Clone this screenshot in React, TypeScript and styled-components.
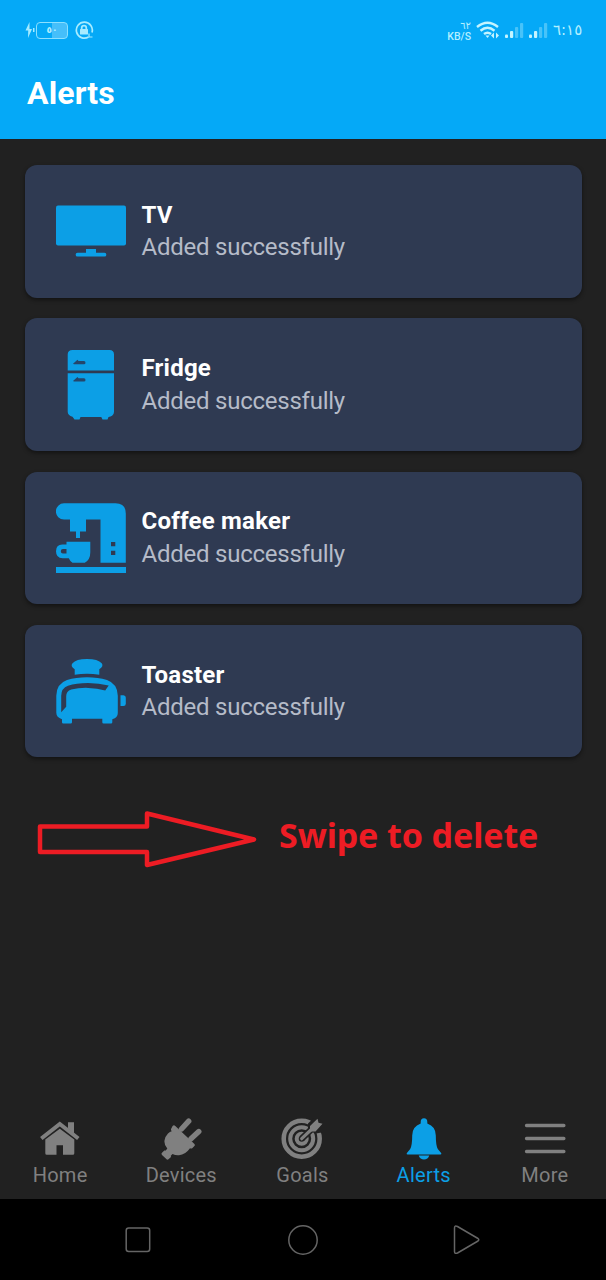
import React from "react";
import styled, { createGlobalStyle } from "styled-components";

const GlobalStyle = createGlobalStyle`
  * { box-sizing: border-box; }
  body { margin: 0; background: #212121; font-family: Roboto, "Liberation Sans", sans-serif; }
`;

const Screen = styled.div`
  width: 606px;
  height: 1280px;
  display: flex;
  flex-direction: column;
  background: #212121;
  overflow: hidden;
`;

const Header = styled.header`
  height: 139px;
  flex: none;
  background: #05a9f7;
`;

const StatusBar = styled.div`
  height: 60px;
  padding: 0 25px 0 24px;
  display: flex;
  justify-content: space-between;
  align-items: center;
  color: #b4efff;
`;

const StatusGroup = styled.div<{ $gap: number }>`
  display: flex;
  align-items: center;
  gap: ${(p) => p.$gap}px;
`;

const Battery = styled.div`
  width: 32px;
  height: 17px;
  border: 1px solid #8ce0ff;
  border-radius: 4px;
  display: flex;
  align-items: center;
  justify-content: center;
  font: 700 9px/15px "DejaVu Sans", sans-serif;
  background: linear-gradient(to right, transparent 50%, #46bffa 50%);
`;

const Speed = styled.div`
  display: flex;
  flex-direction: column;
  align-items: flex-end;
  font-size: 10.5px;
  line-height: 11px;
  font-weight: 500;
  padding-top: 1px;
`;

const SpeedValue = styled.span`
  font: 10px/11px "DejaVu Sans", sans-serif;
`;

const Clock = styled.span`
  font: 15px/20px "DejaVu Sans", sans-serif;
  width: 28px;
  text-align: right;
  white-space: nowrap;
`;

const PageTitle = styled.h1`
  margin: 13px 0 0 27px;
  color: #fff;
  font-size: 32px;
  line-height: 40px;
  font-weight: 700;
  letter-spacing: 0.15px;
`;

const AlertList = styled.main`
  padding: 26px 24.5px 0 24.5px;
  display: flex;
  flex-direction: column;
  gap: 20.8px;
`;

const AlertCard = styled.article`
  height: 132.5px;
  padding: 0 31.5px;
  display: flex;
  align-items: center;
  gap: 15.5px;
  border-radius: 12px;
  background: #2f3a52;
  box-shadow: 0 2px 4px rgba(0, 0, 0, 0.45);
`;

const DeviceIcon = styled.svg`
  width: 70px;
  height: 70px;
  flex: none;
  fill: #0c9fe6;
`;

const AlertBody = styled.div`
  line-height: 32.5px;
  white-space: nowrap;
`;

const AlertTitle = styled.div`
  color: #fff;
  font-size: 24px;
  font-weight: 700;
  letter-spacing: 0.22px;
`;

const AlertText = styled.div`
  color: #b5bbc8;
  font-size: 24px;
  letter-spacing: -0.24px;
`;

const Hint = styled.section`
  flex: 1;
  padding: 53px 0 0 36px;
  display: flex;
  align-items: flex-start;
  gap: 22px;
`;

const HintText = styled.span`
  color: #ed1c24;
  font: 700 34px/50px "Noto Sans", sans-serif;
  letter-spacing: -0.1px;
  white-space: nowrap;
`;

const TabBar = styled.nav`
  height: 86px;
  flex: none;
  display: grid;
  grid-template-columns: repeat(5, 1fr);
`;

const Tab = styled.div<{ $active?: boolean }>`
  display: flex;
  flex-direction: column;
  align-items: center;
  padding: 5px 1px 0 0;
  color: ${(p) => (p.$active ? "#0c9fe6" : "#808080")};
  font-size: 20px;
  line-height: 24px;
  letter-spacing: 0.25px;
  svg { width: 42px; height: 42px; margin-bottom: 3px; }
`;

const SystemBar = styled.footer`
  height: 81px;
  flex: none;
  padding: 0 123px 0 123px;
  display: flex;
  align-items: center;
  justify-content: space-between;
  background: #000;
`;

const SystemIcon = styled.svg`
  width: 30px;
  height: 30px;
  fill: none;
  stroke: #656565;
  stroke-width: 1.5;
  stroke-linejoin: round;
`;

const TvIcon = () => (
  <DeviceIcon viewBox="0 0 70 70">
    <rect x="0" y="9.500" width="70" height="40" rx="2" />
    <path d="M30 53h10v3.800h8.500a1.800 1.800 0 0 1 0 3.700h-27a1.800 1.800 0 0 1 0-3.700H30z" />
  </DeviceIcon>
);

const FridgeIcon = () => (
  <DeviceIcon viewBox="0 0 70 70">
    <path d="M16.500 0h37Q58 0 58 4.500v16H11.700v-16Q11.700 0 16.500 0zM11.700 23.200H58v38.300q0 3.500-3.500 5l-2 .5-1 2.500h-5L45.300 67H24.500l-1 2.500h-5l-2-2.700q-4.800-1.300-4.800-5z" />
    <g fill="#24466b">
      <path d="M17 13.800l4.500-4 1 1.300h5.500q1.500 0 1.500 1.600t-1.500 1.600H18z" />
      <path d="M17 31l4.500-4 1 1.300h5.500q1.500 0 1.500 1.600t-1.500 1.600H18z" />
    </g>
  </DeviceIcon>
);

const CoffeeIcon = () => (
  <DeviceIcon viewBox="0 0 70 70">
    <path
      fillRule="evenodd"
      d="M8 .3h51.500q10.300 0 10.300 10.200v49.200H44.500V16.500H30v12h-6V35h-4v-6.500h-6v-12H8A8 8 0 0 1 8 .3zM55 39v4.300h4.300V39zm0 8.700V52h4.300v-4.300z"
    />
    <path
      fillRule="evenodd"
      d="M10.500 38.700h23.800v10.500q0 7.500-5.500 10.500H16.500q-2.500-1.500-3.700-4.500H6.500Q0 55 0 48.200t6.500-6.700h4zm0 7.300H7a2.200 2.200 0 0 0 0 4.400h3.500z"
    />
    <rect y="64" width="70" height="6" />
  </DeviceIcon>
);

const ToasterIcon = () => (
  <DeviceIcon viewBox="0 -.8 70 70">
    <path d="M18.700 18v-5.500Q14 9.500 16.500 6.500 20 2.200 31 2.200T45.700 6.500q2.300 3-2.400 6V18Q31 16 18.700 18z" />
    <path
      fillRule="evenodd"
      d="M.3 39Q.5 27 11 23.300 20 20.500 31 20.500t20 2.800Q61.500 27 61.800 39v17q0 3.500-3 5.500l-2.500 1v3q0 1.300-1.300 1.300h-7.500q-1.200 0-1.200-1.300V62H16v3.500q0 1.300-1.300 1.300H7.200q-1.200 0-1.200-1.300v-3Q.3 60.500.3 56zM5.200 55.500l5-5.500V39.500q0-5 5-6.700 8-2 17-1.700 9 .2 17 2.700l3.500-5Q43 26.300 32 26.300 20 26.300 12 29 5.200 31.500 5.200 39z"
    />
    <path d="M64.500 38.500h3q2.300 0 2.300 2.500v6q0 2.300-2.300 2.300h-3z" />
  </DeviceIcon>
);

const HomeIcon = () => (
  <svg viewBox="0 0 42 42" fill="currentColor">
    <path d="M29 10.500V4.300h6v11.500z" />
    <path d="M2.300 20.500L20.800 6l18.500 14.500" fill="none" stroke="currentColor" strokeWidth="4" />
    <path d="M6.300 21.500L20.800 10.800l14.500 10.700v13.700q0 1.500-1.500 1.500H24V27.300h-6.500v9.400H7.800q-1.500 0-1.500-1.500z" />
  </svg>
);

const PlugIcon = () => (
  <svg viewBox="0 0 42 42" fill="currentColor">
    <path
      d="M28.700 3.200L21.500 11M38.800 13.500L31 20.700"
      stroke="currentColor"
      strokeWidth="5.400"
      strokeLinecap="round"
    />
    <path d="M12.600 8q1.300-1.300 2.700 0L34.200 25.700q1.300 1.200.2 2.300l-2.200 2.200q-1 .8-2.200 0Q25.500 36.500 19 37.300q-3.500.3-6.500-1.300l-1.700 1.800.2 1.200-2.500 2.300q-1.200.8-2.200-.2l-4.300-4.200q-1-1.200 0-2.200l2.300-2.200h1.500l1.500-2Q4 27 4.500 22.500q.5-4 3.500-7 2-1.800 3.700-2.300-1.300-1.500-.4-2.800z" />
  </svg>
);

const GoalIcon = () => (
  <svg viewBox="0 0 42 42" fill="none" stroke="currentColor">
    <circle cx="20.700" cy="20.700" r="18" strokeWidth="4.500" />
    <circle cx="20.700" cy="20.700" r="11.500" strokeWidth="4" />
    <circle cx="20.700" cy="20.700" r="5" strokeWidth="4" />
    <path d="M20.700 20.700L36.500 5.500" stroke="#212121" strokeWidth="6.500" />
    <path d="M27 12V5.500L35-2l8 7v9l-8 1.500z" fill="#212121" stroke="none" />
    <path d="M20.700 20.700L33 9" strokeWidth="3.200" strokeLinecap="round" />
    <path d="M29 13.500V8L36.500.8l1 4 4 1L34.500 13.500z" fill="currentColor" stroke="none" />
  </svg>
);

const BellIcon = () => (
  <svg viewBox="0 0 42 42" fill="currentColor">
    <path d="M17.700 4q0-3.700 3.300-3.700T24.300 4v1.500q8.500 3 8.500 12 0 10 2 13.500l3.500 4.200q.3 1.300-1 1.300H4.700q-1.300 0-1-1.300L7.200 31q2-3.500 2-13.500 0-9 8.500-12z" />
    <path d="M15.700 37.500h10.600q-1.300 4-5.300 4t-5.300-4z" />
  </svg>
);

const MenuIcon = () => (
  <svg viewBox="0 0 42 42" stroke="currentColor" strokeWidth="3.300" strokeLinecap="round">
    <path d="M2.500 7.500h37.400M2.500 20.500h37.400M2.500 33.500h37.400" />
  </svg>
);

const SignalIcon = () => (
  <svg width="19" height="16" viewBox="0 0 19 16" fill="#c4f4ff">
    <rect x="0" y="12.500" width="3" height="3.500" rx="1" />
    <rect x="5" y="9" width="3.200" height="7" rx="1" />
    <g opacity=".35">
      <rect x="10" y="5" width="3.200" height="11" rx="1" />
      <rect x="15" y="1" width="3.200" height="15" rx="1" />
    </g>
  </svg>
);

const alerts = [
  { name: "TV", Icon: TvIcon },
  { name: "Fridge", Icon: FridgeIcon },
  { name: "Coffee maker", Icon: CoffeeIcon },
  { name: "Toaster", Icon: ToasterIcon },
];

const tabs = [
  { name: "Home", Icon: HomeIcon },
  { name: "Devices", Icon: PlugIcon },
  { name: "Goals", Icon: GoalIcon },
  { name: "Alerts", Icon: BellIcon },
  { name: "More", Icon: MenuIcon },
];

export default function App() {
  return (
    <Screen>
      <GlobalStyle />
      <Header>
        <StatusBar>
          <StatusGroup $gap={6}>
            <StatusGroup $gap={1}>
              <svg width="11" height="18" viewBox="0 0 11 18" fill="#a4eaff">
                <path d="M5.500 1L1.500 9.500h2.700L4 17l4-9H5.500z" />
                <rect x="9" y="7" width="1.500" height="4" />
              </svg>
              <Battery>٥٠</Battery>
            </StatusGroup>
            <svg width="20" height="19" viewBox="0 0 20 19" fill="none" stroke="#a8ecff" strokeWidth="1.700">
              <path d="M14.500 16A8 8 0 1 1 18 11.500" />
              <path d="M15 12.500v3.500h3.500" strokeWidth="1.200" />
              <path d="M7.700 8.500V7a2.300 2.300 0 0 1 4.600 0v1.500" />
              <rect x="6" y="8" width="8" height="5.500" rx=".5" fill="#a8ecff" stroke="none" />
            </svg>
          </StatusGroup>
          <StatusGroup $gap={5}>
            <Speed>
              <SpeedValue>٦٢</SpeedValue>
              <span>KB/S</span>
            </Speed>
            <svg width="24" height="18" viewBox="0 0 24 18" fill="none" stroke="#c4f4ff" strokeWidth="2.400">
              <path d="M1 6q10.500-8.500 21 0M4.500 9.700q7-5.700 14 0M8 13q3.500-2.700 7 0" />
              <path d="M9.500 14.500h4l-2 2.500z" fill="#c4f4ff" stroke="none" />
              <path d="M18 11.500v6l-3-3zM20 11.500v6l3-3z" fill="#c4f4ff" stroke="none" />
            </svg>
            <SignalIcon />
            <SignalIcon />
            <Clock>٦:١٥</Clock>
          </StatusGroup>
        </StatusBar>
        <PageTitle>Alerts</PageTitle>
      </Header>
      <AlertList>
        {alerts.map(({ name, Icon }) => (
          <AlertCard key={name}>
            <Icon />
            <AlertBody>
              <AlertTitle>{name}</AlertTitle>
              <AlertText>Added successfully</AlertText>
            </AlertBody>
          </AlertCard>
        ))}
      </AlertList>
      <Hint>
        <svg width="221" height="58" viewBox="0 0 221 58" fill="none" stroke="#ed1c24" strokeWidth="4.500" strokeLinejoin="round">
          <path d="M4 16.500h107V3.500L218 29.500 111 55V42H4z" />
        </svg>
        <HintText>Swipe to delete</HintText>
      </Hint>
      <TabBar>
        {tabs.map(({ name, Icon }) => (
          <Tab key={name} $active={name === "Alerts"}>
            <Icon />
            {name}
          </Tab>
        ))}
      </TabBar>
      <SystemBar>
        <SystemIcon viewBox="0 0 30 30">
          <rect x="3.200" y="3" width="23.500" height="23.500" rx="2.500" />
        </SystemIcon>
        <SystemIcon viewBox="0 0 30 30">
          <circle cx="15" cy="15" r="14.200" />
        </SystemIcon>
        <SystemIcon viewBox="0 0 30 30">
          <path d="M1.500 3q0-3 3-1.500l20.500 12q1.500 1.200 0 2.500l-20.500 12q-3 1.200-3-1.500z" />
        </SystemIcon>
      </SystemBar>
    </Screen>
  );
}
